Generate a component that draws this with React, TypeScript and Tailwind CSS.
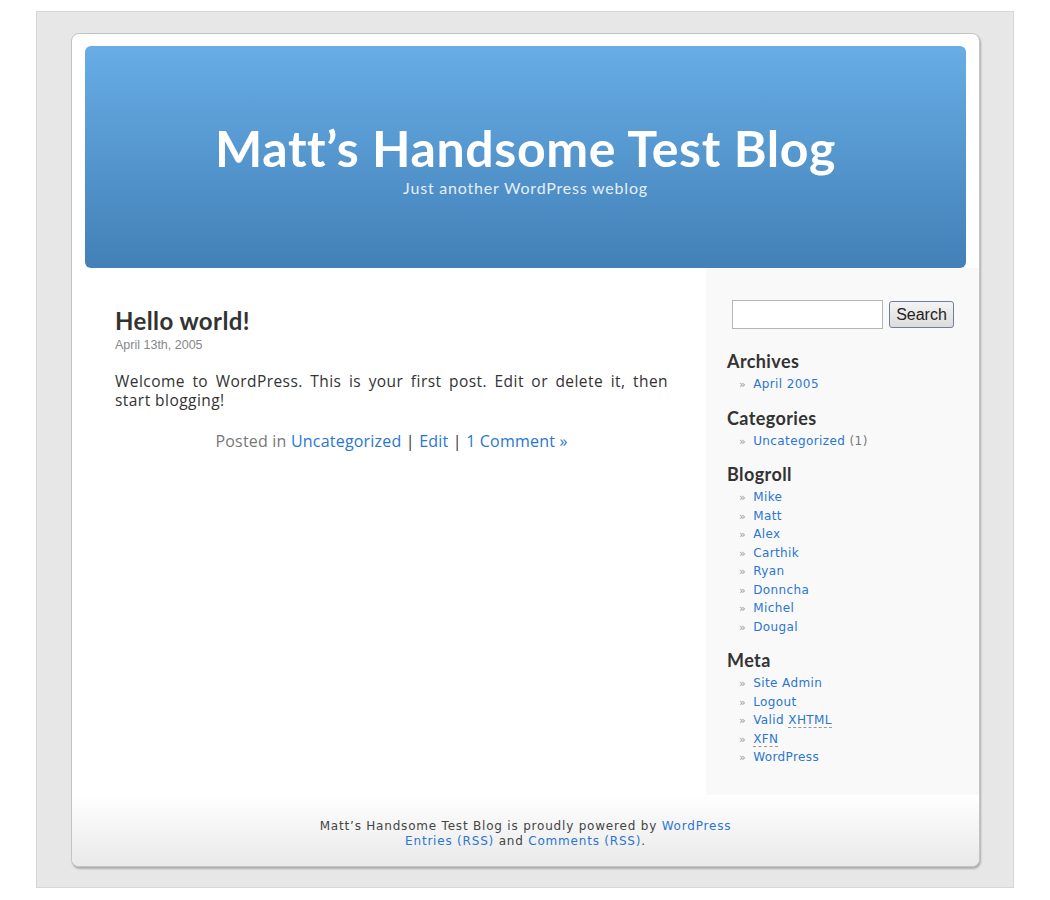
import * as React from 'react';

const link = 'text-[#2a76d1] no-underline';

const blogroll = ['Mike', 'Matt', 'Alex', 'Carthik', 'Ryan', 'Donncha', 'Michel', 'Dougal'];

function SideItem({ children }: { children: React.ReactNode }) {
  return (
    <li className="flex items-baseline gap-[7px] h-[18.5px]">
      <span className="text-[#999] text-[11px]">»</span>
      <span>{children}</span>
    </li>
  );
}

function SideHeading({ children }: { children: React.ReactNode }) {
  return (
    <h2 className="font-['Lato',sans-serif] font-bold text-[18px] text-[#333] leading-[20px]">
      {children}
    </h2>
  );
}

export default function App() {
  return (
    <div className="min-h-[900px] bg-white pt-[11px] pl-[36px]">
      <div className="w-[978px] h-[877px] bg-[#e7e7e7] border border-[#d6d6d6] pt-[21px] pl-[34px]">
        <div className="w-[909px] h-[834px] bg-white rounded-[8px] border border-[#c4c4c4] shadow-[1px_2px_2px_rgba(0,0,0,0.25)] flex flex-col overflow-hidden">
          <div className="px-[13px] pt-[12px]">
            <div className="h-[222px] rounded-[6px] bg-gradient-to-b from-[#68ade6] to-[#4280b7] flex flex-col items-center pt-[74px] text-white">
              <h1 className="font-['Lato',sans-serif] font-bold text-[50px] leading-[56px] tracking-[0.6px]">
                Matt’s Handsome Test Blog
              </h1>
              <div className="font-['Lato',sans-serif] text-[16px] leading-[18px] text-[#e4eef8] mt-[3px] tracking-[0.8px]">
                Just another WordPress weblog
              </div>
            </div>
          </div>

          <div className="flex flex-1">
            <div className="flex-1 pl-[43px] pr-[38px] pt-[40px]">
              <h2 className="font-['Lato',sans-serif] font-bold text-[24px] leading-[26px] text-[#333] tracking-[0.4px]">
                Hello world!
              </h2>
              <div className="font-['Liberation_Sans',sans-serif] text-[12.5px] text-[#888] leading-[14px] mt-[4px]">
                April 13th, 2005
              </div>
              <p className="font-['Open_Sans',sans-serif] text-[15.5px] leading-[19px] text-[#333] text-justify mt-[20px] tracking-[0.45px]">
                Welcome to WordPress. This is your first post. Edit or delete it, then start blogging!
              </p>
              <p className="font-['Open_Sans',sans-serif] text-[16px] leading-[19px] text-[#777] text-center mt-[22px] tracking-[0.2px]">
                Posted in <a className={link}>Uncategorized</a> <span className="text-[#333]">|</span>{' '}
                <a className={link}>Edit</a> <span className="text-[#333]">|</span>{' '}
                <a className={link}>1 Comment »</a>
              </p>
            </div>

            <div className="w-[273px] flex flex-col">
              <div className="h-[527px] bg-[#f9f9f9] pl-[21px] pt-[32px] font-['DejaVu_Sans',sans-serif] text-[12px] tracking-[0.4px] text-[#333]">
                <div className="flex items-center gap-[6px] pl-[5px]">
                  <input className="w-[151px] h-[29px] bg-white border border-[#b5b5b5]" />
                  <button className="h-[27px] w-[65px] bg-gradient-to-b from-[#f4f4f4] to-[#dcdcdc] border border-[#6f7f9c] rounded-[3px] text-[16px] tracking-normal font-['Liberation_Sans',sans-serif] text-[#222]">
                    Search
                  </button>
                </div>

                <div className="mt-[22px]">
                  <SideHeading>Archives</SideHeading>
                  <ul className="pl-[12px] mt-[4px]">
                    <SideItem><a className={link}>April 2005</a></SideItem>
                  </ul>
                </div>

                <div className="mt-[14px]">
                  <SideHeading>Categories</SideHeading>
                  <ul className="pl-[12px] mt-[4px]">
                    <SideItem>
                      <a className={link}>Uncategorized</a> <span className="text-[#777]">(1)</span>
                    </SideItem>
                  </ul>
                </div>

                <div className="mt-[14px]">
                  <SideHeading>Blogroll</SideHeading>
                  <ul className="pl-[12px] mt-[4px]">
                    {blogroll.map((n) => (
                      <SideItem key={n}><a className={link}>{n}</a></SideItem>
                    ))}
                  </ul>
                </div>

                <div className="mt-[14px]">
                  <SideHeading>Meta</SideHeading>
                  <ul className="pl-[12px] mt-[4px]">
                    <SideItem><a className={link}>Site Admin</a></SideItem>
                    <SideItem><a className={link}>Logout</a></SideItem>
                    <SideItem>
                      <a className={link}>
                        Valid <abbr className="no-underline border-b border-dashed border-[#999]">XHTML</abbr>
                      </a>
                    </SideItem>
                    <SideItem>
                      <a className={link}>
                        <abbr className="no-underline border-b border-dashed border-[#999]">XFN</abbr>
                      </a>
                    </SideItem>
                    <SideItem><a className={link}>WordPress</a></SideItem>
                  </ul>
                </div>
              </div>
            </div>
          </div>

          <div className="h-[72px] bg-gradient-to-b from-white to-[#e9e9e9] flex flex-col items-center pt-[24px] font-['DejaVu_Sans',sans-serif] text-[12px] tracking-[0.8px] leading-[15px] text-[#444]">
            <div>
              Matt’s Handsome Test Blog is proudly powered by <a className={link}>WordPress</a>
            </div>
            <div>
              <a className={link}>Entries (RSS)</a> and <a className={link}>Comments (RSS)</a>.
            </div>
          </div>
        </div>
      </div>
    </div>
  );
}
